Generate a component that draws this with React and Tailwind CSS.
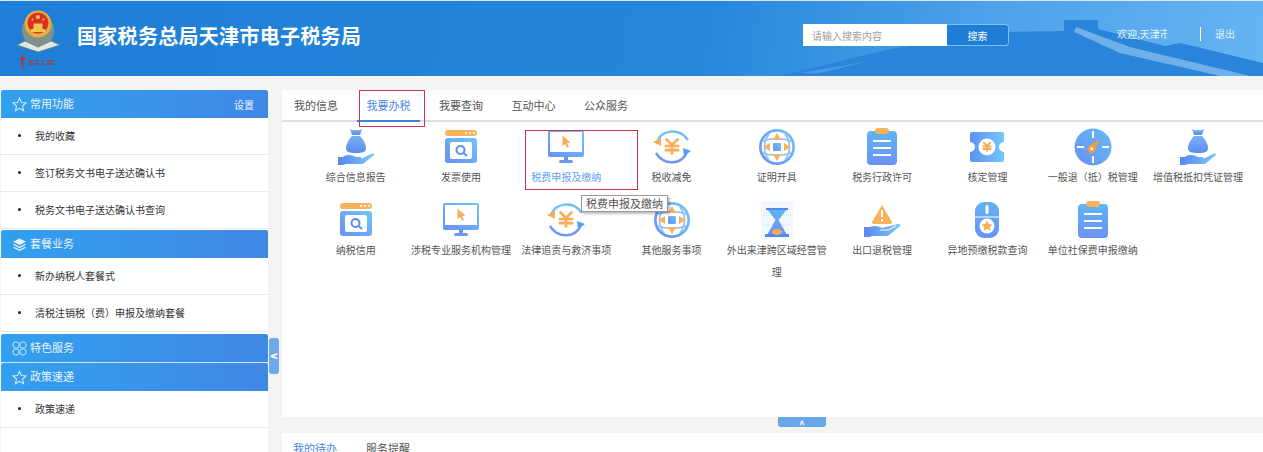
import React from "react";

const font = { fontFamily: '"Noto Sans CJK SC", "Liberation Sans", sans-serif' };

// icons, all drawn on a 40x38 box
function Svg({ children }) {
  return (
    <svg viewBox="0 0 40 38" className="w-[40px] h-[38px] shrink-0">
      {children}
    </svg>
  );
}

function Yen({ x, y, s = 1, color = "#f9ad57", w = 2.2 }) {
  return (
    <g transform={`translate(${x} ${y}) scale(${s})`} stroke={color} strokeWidth={w} fill="none">
      <path d="M-6 -7 L0 -1 L6 -7 M-7 0 H7 M-7 4 H7 M0 -1 V8" />
    </g>
  );
}

function BagHand() {
  return (
    <Svg>
      <path d="M14 1 Q17 3 20 2 Q23 3 26 1 L24 7 H16 Z" fill="url(#blueV)" />
      <path d="M16 8 H24 C28 12 30 17 30 20 C30 24 27 25 20 25 C13 25 10 24 10 20 C10 17 12 12 16 8 Z" fill="url(#blueV)" />
      <path d="M2 29 H7 C11 26 16 27 20 29 H24 C26 29 26 32 24 32 H18 L25 31 L35 26 C37 25 39 26 38 27 L27 36 H10 L7 37 H2 Z" fill="url(#blueH)" />
    </Svg>
  );
}

function Invoice() {
  return (
    <Svg>
      <rect x="4" y="2" width="32" height="6" rx="3" fill="#f9b25c" />
      <circle cx="25" cy="5" r="1.1" fill="#fff" />
      <circle cx="29" cy="5" r="1.1" fill="#fff" />
      <circle cx="33" cy="5" r="1.1" fill="#fff" />
      <rect x="4" y="10" width="32" height="25" rx="3" fill="url(#blueD)" />
      <rect x="9" y="14" width="22" height="17" rx="2" fill="#fff" />
      <circle cx="19.5" cy="22" r="4" fill="none" stroke="#5b8df0" strokeWidth="2" />
      <path d="M22.5 25 L26 28" stroke="#5b8df0" strokeWidth="2" />
    </Svg>
  );
}

function Monitor() {
  return (
    <Svg>
      <rect x="2" y="2" width="36" height="27" rx="2" fill="url(#blueD)" />
      <rect x="4" y="4" width="32" height="20" fill="#fff" />
      <path d="M16.5 7.5 L24.5 14.5 L21 15 L23 19 L21 19.8 L19.3 16 L16.5 18 Z" fill="#f9ad57" />
      <path d="M18 29 H22 V32 H18 Z" fill="#6b97f3" />
      <rect x="13" y="32" width="14" height="3" rx="1.5" fill="#6b97f3" />
    </Svg>
  );
}

function Refund() {
  return (
    <Svg>
      <path d="M5 14 C9 2 27 -1 36 12" fill="none" stroke="#6ec1f8" strokeWidth="2.4" />
      <path d="M35 24 C30 37 12 38 4 25" fill="none" stroke="#7198f4" strokeWidth="2.4" />
      <path d="M1 14 L9 10 L9 18 Z" fill="#f9ad57" />
      <path d="M39 23 L31 20 L32 28 Z" fill="#4fa0f2" />
      <Yen x={20} y={18} s={1.05} w={2.6} />
    </Svg>
  );
}

function Globe() {
  return (
    <Svg>
      <circle cx="20" cy="19" r="18" fill="url(#blueD)" />
      <circle cx="20" cy="19" r="15.3" fill="#fff" />
      <path d="M12 6 C6 14 6 24 12 32 M28 6 C34 14 34 24 28 32 M6 13 C14 10 26 10 34 13 M6 25 C14 28 26 28 34 25" fill="none" stroke="#8fbdf6" strokeWidth="1.6" />
      <rect x="16" y="15" width="8" height="8" rx="1" fill="url(#blueD)" />
      <path d="M20 5 L24 12 H16 Z M20 33 L24 26 H16 Z M6 19 L13 15 V23 Z M34 19 L27 15 V23 Z" fill="#f9b25c" />
    </Svg>
  );
}

function Clipboard() {
  return (
    <Svg>
      <rect x="5" y="3" width="30" height="34" rx="4" fill="url(#blueV2)" />
      <rect x="13" y="0" width="14" height="6" rx="3" fill="#f9b25c" />
      <path d="M11 13 H29 M11 20 H29 M11 27 H29" stroke="#fff" strokeWidth="2.2" />
    </Svg>
  );
}

function Ticket() {
  return (
    <Svg>
      <path d="M5 4 H35 Q37 4 37 6 V14 A5 5 0 0 0 37 24 V32 Q37 34 35 34 H5 Q3 34 3 32 V24 A5 5 0 0 0 3 14 V6 Q3 4 5 4 Z" fill="url(#blueH2)" />
      <circle cx="20" cy="19" r="8.5" fill="#fff" />
      <Yen x={20} y={18.5} s={0.62} w={3} />
    </Svg>
  );
}

function Compass() {
  return (
    <Svg>
      <circle cx="20" cy="19" r="18.5" fill="url(#blueD2)" />
      <path d="M20 3 V10 M20 28 V35 M4 19 H11 M29 19 H36" stroke="#fff" strokeWidth="2" />
      <path d="M27 11 L22 23 A4 4 0 1 1 16 18 Z" fill="#f49c45" />
      <circle cx="18.8" cy="20.8" r="1.5" fill="#fff" />
    </Svg>
  );
}

function Hourglass() {
  return (
    <Svg>
      <rect x="4" y="0" width="32" height="38" rx="2" fill="#f3f8fe" />
      <path d="M6 14 H34 M6 24 H34" stroke="#dbe8fb" strokeWidth="1.2" />
      <path d="M10 8 H30 L21.5 19 L30 34 H10 L18.5 19 Z" fill="url(#blueV2)" />
      <path d="M9 7 H31 V9 H9 Z M8 33 H32 V36 H8 Z" fill="#4f8aef" />
      <ellipse cx="20" cy="31" rx="5" ry="3" fill="#f9ad57" />
    </Svg>
  );
}

function WarnHand() {
  return (
    <Svg>
      <path d="M20 4 L30 21 Q30 23 28 23 H12 Q10 23 10 21 Z" fill="#f9b25c" />
      <path d="M20 9 V16 M20 18 V20.5" stroke="#fff" strokeWidth="2" />
      <path d="M2 26 H8 C12 24 16 25 20 27 L36 23 C39 23 39 25 37 26 L26 35 H10 L8 36 H2 Z" fill="url(#blueH)" />
      <path d="M18 29 L26 29 L34 25" stroke="#fff" strokeWidth="1" fill="none" />
    </Svg>
  );
}

function MouseStar() {
  return (
    <Svg>
      <rect x="8" y="1" width="24" height="36" rx="9" fill="url(#blueV2)" />
      <path d="M8 16 H32" stroke="#fff" strokeWidth="1" />
      <rect x="18.5" y="4" width="3" height="9" rx="1.5" fill="#fff" />
      <circle cx="20" cy="25" r="7.5" fill="#fff" />
      <path d="M20 19.5 L21.7 23 L25.5 23.4 L22.7 26 L23.5 29.8 L20 27.8 L16.5 29.8 L17.3 26 L14.5 23.4 L18.3 23 Z" fill="#f9ad57" />
    </Svg>
  );
}

function Emblem() {
  return (
    <svg viewBox="0 0 46 62" className="w-[46px] h-[62px] shrink-0">
      <path d="M7 14 C2 24 6 36 21 41 C36 36 40 24 35 14 Z" fill="#7f9188" />
      <path d="M0 37 L8 33 L21 39 L34 33 L43 37 L21 44 Z" fill="#dfe8e4" stroke="#62807a" strokeWidth="0.8" />
      <circle cx="21" cy="16" r="13.5" fill="#e0b23c" />
      <circle cx="21" cy="15" r="10.5" fill="#de2f27" />
      <path d="M14 21 H28 V24 H14 Z M16.5 15.5 H25.5 V21 H16.5 Z" fill="#edc64f" />
      <circle cx="21" cy="9" r="2" fill="#edc64f" />
      <circle cx="15.5" cy="11.5" r="1" fill="#edc64f" />
      <circle cx="26.5" cy="11.5" r="1" fill="#edc64f" />
      <path d="M5.5 47 V60 M3 51 H8" stroke="#b8352f" strokeWidth="1.8" />
      <path d="M11 53 h5 M18 53 h3 M24 53 h3 M30 53 h7 M11 56 h6 M18 56 h4 M24 56 h4 M30 56 h7" stroke="#b8352f" strokeWidth="1.5" opacity="0.85" />
    </svg>
  );
}

function StarIcon() {
  return (
    <svg viewBox="0 0 16 16" className="w-[15px] h-[15px] shrink-0">
      <path d="M8 1.2 L10 5.8 L15 6.3 L11.2 9.6 L12.3 14.6 L8 12 L3.7 14.6 L4.8 9.6 L1 6.3 L6 5.8 Z" fill="none" stroke="#d8eefd" strokeWidth="1.1" />
    </svg>
  );
}

function LayersIcon() {
  return (
    <svg viewBox="0 0 16 16" className="w-[15px] h-[15px] shrink-0">
      <path d="M8 1.5 L15 5 L8 8.5 L1 5 Z" fill="#e4f3fe" />
      <path d="M2.5 7.5 L8 10.3 L13.5 7.5 L15 8.3 L8 12 L1 8.3 Z" fill="#e4f3fe" />
      <path d="M2.5 10.7 L8 13.4 L13.5 10.7 L15 11.4 L8 15 L1 11.4 Z" fill="#e4f3fe" />
    </svg>
  );
}

function CloverIcon() {
  return (
    <svg viewBox="0 0 16 16" className="w-[15px] h-[15px] shrink-0" fill="none" stroke="#cfe9fc" strokeWidth="1">
      <circle cx="4.3" cy="4.3" r="3.4" />
      <circle cx="11.7" cy="4.3" r="3.4" />
      <circle cx="4.3" cy="11.7" r="3.4" />
      <circle cx="11.7" cy="11.7" r="3.4" />
    </svg>
  );
}

const services = [
  { label: "综合信息报告", icon: BagHand },
  { label: "发票使用", icon: Invoice },
  { label: "税费申报及缴纳", icon: Monitor, active: true },
  { label: "税收减免", icon: Refund },
  { label: "证明开具", icon: Globe },
  { label: "税务行政许可", icon: Clipboard },
  { label: "核定管理", icon: Ticket },
  { label: "一般退（抵）税管理", icon: Compass },
  { label: "增值税抵扣凭证管理", icon: BagHand },
  { label: "纳税信用", icon: Invoice },
  { label: "涉税专业服务机构管理", icon: Monitor },
  { label: "法律追责与救济事项", icon: Refund },
  { label: "其他服务事项", icon: Globe },
  { label: "外出来津跨区域经营管理", icon: Hourglass },
  { label: "出口退税管理", icon: WarnHand },
  { label: "异地预缴税款查询", icon: MouseStar },
  { label: "单位社保费申报缴纳", icon: Clipboard },
];

function SideHeader({ icon: Icon, title, right, className = "" }) {
  return (
    <div className={"h-[28px] flex items-center px-[11px] gap-[3px] rounded-t-[2px] bg-gradient-to-r from-[#31a0ee] to-[#4088e6] text-[#eaf5fe] text-[11px] " + className}>
      <Icon />
      <span className="flex-1 pb-[2px]">{title}</span>
      {right && <span className="text-[10px] pr-[3px]">{right}</span>}
    </div>
  );
}

function SideItem({ children }) {
  return (
    <div className="h-[37px] pb-[2px] flex items-center border-b border-dotted border-[#d6d6d6] text-[10px] text-[#333333]">
      <span className="w-[3px] h-[3px] rounded-full bg-[#222222] ml-[17px] mr-[14px]" />
      {children}
    </div>
  );
}

function Tab({ children, active }) {
  return (
    <div className={"w-[63px] flex items-center justify-center text-[11px] " + (active ? "h-[32px] text-[#4c86e6] border-b-2 border-[#3f7fdc]" : "h-[31px] text-[#555555]")}>
      {children}
    </div>
  );
}

export default function App() {
  return (
    <div className="w-[1263px] h-[452px] overflow-hidden bg-[#f4f4f4] relative" style={font}>
      <svg className="absolute w-0 h-0">
        <defs>
          <linearGradient id="blueD" x1="0" y1="1" x2="1" y2="0">
            <stop offset="0" stopColor="#6a8ef5" />
            <stop offset="1" stopColor="#6ec6fa" />
          </linearGradient>
          <linearGradient id="blueD2" x1="0" y1="1" x2="1" y2="0">
            <stop offset="0" stopColor="#6a8ef5" />
            <stop offset="1" stopColor="#62bdf8" />
          </linearGradient>
          <linearGradient id="blueV" x1="0" y1="0" x2="0" y2="1">
            <stop offset="0" stopColor="#7ab0f6" />
            <stop offset="1" stopColor="#5a8df0" />
          </linearGradient>
          <linearGradient id="blueV2" x1="0" y1="0" x2="0" y2="1">
            <stop offset="0" stopColor="#60b4f6" />
            <stop offset="1" stopColor="#6a92f4" />
          </linearGradient>
          <linearGradient id="blueH" x1="0" y1="0" x2="1" y2="0">
            <stop offset="0" stopColor="#5a86ef" />
            <stop offset="1" stopColor="#7cc8fb" />
          </linearGradient>
          <linearGradient id="blueH2" x1="0" y1="0" x2="1" y2="0">
            <stop offset="0" stopColor="#5f90f3" />
            <stop offset="1" stopColor="#72c8fb" />
          </linearGradient>
        </defs>
      </svg>

      {/* header */}
      <header className="relative h-[76px] border-t border-[#dfe6ee] bg-[linear-gradient(100deg,#1f7ed6_0%,#2586db_55%,#4da2ea_78%,#66b4f3_100%)] flex items-center overflow-hidden">
        {/* great wall behind the search bar */}
        <svg viewBox="0 0 483 75" className="absolute right-0 bottom-0 w-[483px] h-[75px]">
          <path d="M0 75 L110 48 L228 31 L284 30 L284 19 L318 19 L318 28 L385 45 L400 42 L483 62 V75 Z" fill="#2a84da" />
          <path d="M296 26 L350 46 L470 75 L440 75 L340 52 L294 31 Z" fill="#8cc3ef" opacity="0.7" />
          <path d="M20 72 L90 60 L40 72 Z" fill="#5aa7e8" opacity="0.6" />
        </svg>
        <div className="relative ml-[17px]">
          <Emblem />
        </div>
        <h1 className="relative ml-[14px] text-[20px] font-bold text-white tracking-[0.3px] -mt-[5px]">国家税务总局天津市电子税务局</h1>
        <div className="relative ml-auto flex items-center -mt-[7px]">
          <div className="w-[144px] h-[22px] bg-white flex items-center pl-[9px] text-[10px] text-[#a0a0a0]">请输入搜索内容</div>
          <div className="w-[62px] h-[22px] bg-[#1f7dd6] border border-l-0 border-[#7cc0f4] rounded-r-[4px] flex items-center justify-center text-[10px] text-white">搜索</div>
          <span className="ml-[108px] w-[50px] -mt-[3px] overflow-hidden whitespace-nowrap text-[10px] text-[#e8f3fd]">欢迎,天津市</span>
          <span className="ml-[33px] w-px h-[14px] -mt-[3px] bg-white" />
          <span className="ml-[14px] mr-[28px] -mt-[3px] text-[10px] text-[#e8f3fd]">退出</span>
        </div>
      </header>

      <div className="flex pl-px gap-[14px] pt-[14px]">
        {/* left menu */}
        <aside className="w-[267px] h-[362px] bg-white shrink-0">
          <SideHeader icon={StarIcon} title="常用功能" right="设置" />
          <SideItem>我的收藏</SideItem>
          <SideItem>签订税务文书电子送达确认书</SideItem>
          <SideItem>税务文书电子送达确认书查询</SideItem>
          <SideHeader icon={LayersIcon} title="套餐业务" className="mt-px" />
          <SideItem>新办纳税人套餐式</SideItem>
          <SideItem>清税注销税（费）申报及缴纳套餐</SideItem>
          <SideHeader icon={CloverIcon} title="特色服务" className="mt-[2px] border-b border-[#cfe6fb] h-[29px]" />
          <SideHeader icon={StarIcon} title="政策速递" className="rounded-none" />
          <SideItem>政策速递</SideItem>
        </aside>

        {/* main */}
        <main className="flex-1 min-w-0">
          <div className="h-[327px] bg-white">
            <div className="h-[32px] pl-[2.5px] flex gap-[9.5px] border-b-2 border-[#dedede]">
              <Tab>我的信息</Tab>
              <Tab active>我要办税</Tab>
              <Tab>我要查询</Tab>
              <Tab>互动中心</Tab>
              <Tab>公众服务</Tab>
            </div>
            <div className="grid grid-cols-[repeat(9,105.3px)] auto-rows-[73px] pl-[21px] pt-[6px]">
              {services.map((s) => {
                const Icon = s.icon;
                return (
                  <div key={s.label} className="flex flex-col items-center text-center">
                    <Icon />
                    <span className={"text-[10px] leading-[22px] " + (s.active ? "text-[#5ea2f0]" : "text-[#555555]")}>{s.label}</span>
                  </div>
                );
              })}
            </div>
          </div>
          <div className="h-[16px] flex justify-center">
            <div className="w-[48px] h-[10px] ml-[59px] bg-[#68a8ea] rounded-b-[3px] flex items-center justify-center text-[10px] font-bold leading-none pt-[3px] text-white">^</div>
          </div>
          <div className="h-[40px] bg-white flex gap-[29px] px-[11px] pt-[7px] text-[11px]">
            <span className="text-[#4c86e6]">我的待办</span>
            <span className="text-[#555555]">服务提醒</span>
          </div>
        </main>
      </div>

      {/* collapse handle over the gutter */}
      <div className="absolute left-[269px] top-[338px] w-[10px] h-[36px] bg-[#6ea9ee] rounded-[3px] flex items-center justify-center text-[12px] font-black text-white">&lt;</div>

      {/* red marks and the tooltip lie over the page */}
      <div className="absolute left-[359px] top-[90px] w-[66px] h-[37px] border border-[#d3304f]" />
      <div className="absolute left-[525px] top-[130px] w-[113px] h-[60px] border border-[#d3304f]" />
      <div className="absolute left-[581px] top-[195px] h-[17px] px-[4px] bg-white border border-[#999999] shadow-[2px_2px_2px_rgba(0,0,0,0.25)] flex items-center text-[11px] text-[#555555] whitespace-nowrap">税费申报及缴纳</div>
    </div>
  );
}
